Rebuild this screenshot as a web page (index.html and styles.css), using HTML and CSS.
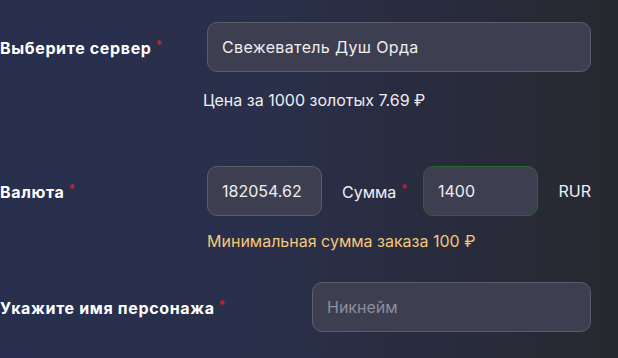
FILE: index.html
```html
<!DOCTYPE html>
<html lang="ru">
<head>
<meta charset="utf-8">
<link rel="stylesheet" href="styles.css">
</head>
<body>
<div class="form">
  <div class="row row-server">
    <label class="label label-server">Выберите сервер<span class="req">*</span></label>
    <div class="field field-server">Свежеватель Душ Орда</div>
  </div>
  <div class="hint hint-price">Цена за 1000 золотых 7.69 ₽</div>

  <div class="row row-currency">
    <label class="label label-currency">Валюта<span class="req">*</span></label>
    <div class="field field-small">182054.62</div>
    <span class="inline-label">Сумма<span class="req">*</span></span>
    <div class="field field-small field-valid">1400</div>
    <span class="unit">RUR</span>
  </div>
  <div class="hint hint-min">Минимальная сумма заказа 100 ₽</div>

  <div class="row row-name">
    <label class="label label-name">Укажите имя персонажа<span class="req">*</span></label>
    <div class="field field-name placeholder">Никнейм</div>
  </div>
</div>
</body>
</html>
```
FILE: styles.css
```css
html, body {
  margin: 0;
  height: 100%;
}
body {
  background: linear-gradient(90deg, #282f4e 0%, #2a2f4a 45%, #27282f 100%);
  font-family: Inter, "Noto Sans", sans-serif;
  color: #ffffff;
  overflow: hidden;
}
.form {
  display: flex;
  flex-direction: column;
  padding-top: 22px;
  padding-right: 27px;
}
.row {
  display: flex;
  align-items: center;
}
.label {
  font-weight: 700;
  font-size: 16px;
  letter-spacing: 0.65px;
  color: #ffffff;
}
.req {
  color: #d81e2a;
  font-size: 12px;
  margin-left: 4px;
  vertical-align: 5px;
  letter-spacing: 0;
}
.label-server { width: 207px; }
.label-currency { width: 207px; }
.label-name { width: 312px; }
.field {
  box-sizing: border-box;
  height: 50px;
  border: 1px solid #5c5d6b;
  border-radius: 10px;
  background: #3d3e4f;
  display: flex;
  align-items: center;
  padding-left: 14px;
  font-size: 16px;
  color: #eeeef2;
}
.field-server { flex: 1; letter-spacing: 0.35px; }
.field-small { width: 115px; }
.field-valid { border-color: #22692d; }
.field-name { flex: 1; }
.placeholder { color: #8e8f9c; }
.inline-label {
  margin-left: 20px;
  width: 81px;
  font-size: 16px;
  color: #eeeef2;
}
.inline-label .req { margin-left: 5px; }
.unit {
  margin-left: auto;
  font-size: 16px;
  color: #eeeef2;
}
.hint {
  font-size: 16px;
  line-height: 20px;
  letter-spacing: 0;
}
.hint-price {
  margin: 18px 0 0 203px;
  color: #eeeef2;
}
.hint-min {
  margin: 15px 0 0 207px;
  color: #f3c777;
}
.row-currency { margin-top: 56px; }
.row-name { margin-top: 31px; }
```
